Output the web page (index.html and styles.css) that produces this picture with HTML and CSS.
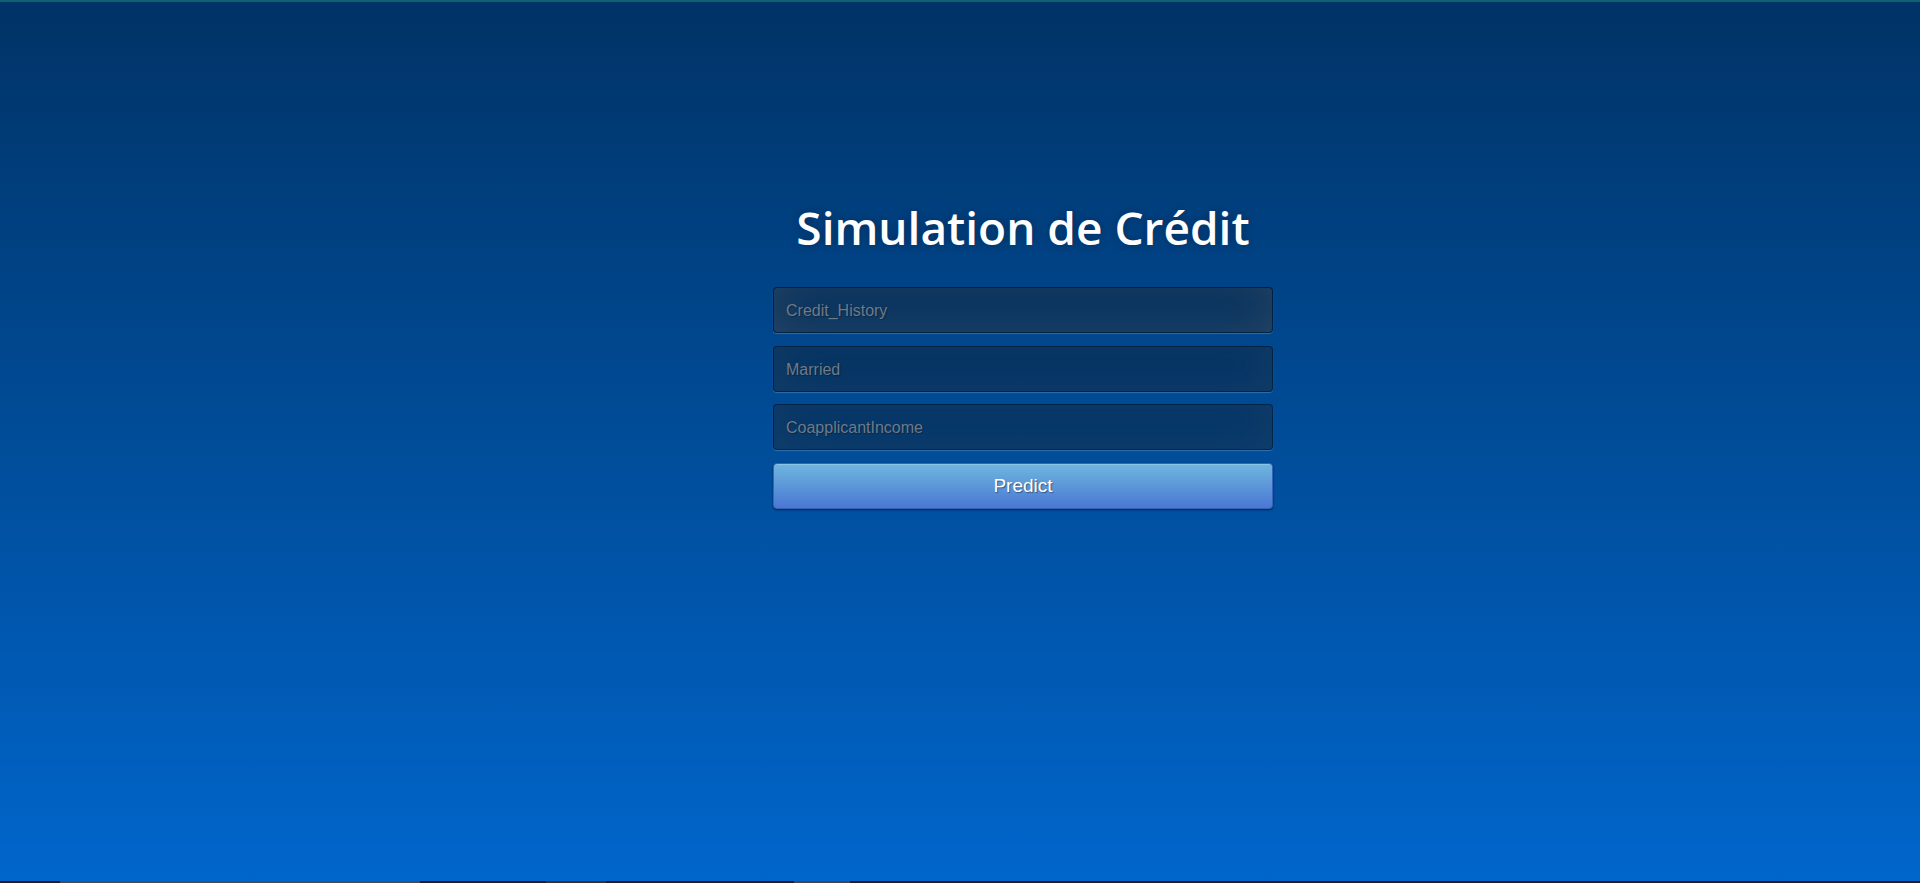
FILE: index.html
```html
<!DOCTYPE html>
<html lang="fr">
<head>
<meta charset="utf-8">
<title>Simulation de Crédit</title>
<link rel="stylesheet" href="styles.css">
</head>
<body>
<div class="topline"></div>
<main class="page">
  <div class="login">
    <h1 class="title">Simulation de Crédit</h1>
    <form class="form">
      <input class="field field-focus" type="text" name="Credit_History" placeholder="Credit_History" autofocus>
      <input class="field" type="text" name="Married" placeholder="Married">
      <input class="field" type="text" name="CoapplicantIncome" placeholder="CoapplicantIncome">
      <button class="btn" type="button">Predict</button>
    </form>
  </div>
</main>
<div class="bottombar">
  <span class="seg seg-a"></span>
  <span class="seg seg-b"></span>
  <span class="seg seg-c"></span>
</div>
</body>
</html>
```
FILE: styles.css
```css
html, body {
  margin: 0;
  padding: 0;
  height: 100%;
}
body {
  display: flex;
  flex-direction: column;
  height: 883px;
  overflow: hidden;
  background: linear-gradient(to bottom, #003366 0%, #0066cc 100%);
  font-family: "Liberation Sans", Arial, sans-serif;
}
.topline {
  height: 2px;
  background: #106272;
  flex: none;
}
.page {
  flex: 1;
}
.login {
  width: 500px;
  margin-left: calc(50% - 187px);
  padding-top: 196px;
}
.title {
  margin: 0 0 30px;
  height: 59px;
  text-align: center;
  color: #fff;
  font-family: "Open Sans", sans-serif;
  font-weight: 600;
  font-size: 46px;
  line-height: 59px;
  letter-spacing: 0;
  text-shadow: 0 0 10px rgba(0, 0, 0, 0.3);
}
.form {
  display: flex;
  flex-direction: column;
  gap: 12.67px;
}
.field {
  box-sizing: border-box;
  width: 500px;
  height: 46px;
  margin: 0;
  padding: 2px 12px 0;
  font-family: "Liberation Sans", Arial, sans-serif;
  font-size: 16px;
  color: #fff;
  caret-color: #fff;
  text-shadow: 1px 1px 1px rgba(0, 0, 0, 0.3);
  background: rgba(0, 0, 0, 0.3);
  border: 1px solid rgba(0, 0, 0, 0.3);
  border-radius: 4px;
  outline: none;
  box-shadow: inset 0 -5px 45px rgba(100, 100, 100, 0.2), 0 1px 1px rgba(255, 255, 255, 0.2);
}
.field::placeholder {
  color: #6f7a86;
  opacity: 1;
}
.field-focus {
  box-shadow: inset 0 -5px 45px rgba(100, 100, 100, 0.4), 0 1px 1px rgba(255, 255, 255, 0.2);
}
.btn {
  box-sizing: border-box;
  width: 500px;
  height: 46px;
  margin: 0;
  padding: 0;
  font-family: "Liberation Sans", Arial, sans-serif;
  font-size: 19px;
  color: #fff;
  text-shadow: 1px 1px 1px rgba(0, 0, 0, 0.4);
  background-color: #4a77d4;
  background-image: linear-gradient(to bottom, #6eb6de, #4a77d4);
  border: 1px solid #3762bc;
  border-radius: 4px;
  box-shadow: inset 0 1px 0 rgba(255, 255, 255, 0.2), 0 1px 2px rgba(0, 0, 0, 0.5);
  cursor: pointer;
}
.bottombar {
  flex: none;
  height: 2px;
  background: #231c1e;
  display: flex;
}
.seg {
  height: 2px;
  display: block;
}
.seg-a {
  margin-left: 60px;
  width: 360px;
  background: #4c4c4e;
}
.seg-b {
  margin-left: 126px;
  width: 60px;
  background: #3a2e2e;
}
.seg-c {
  margin-left: 188px;
  width: 56px;
  background: #4a4548;
}
```
